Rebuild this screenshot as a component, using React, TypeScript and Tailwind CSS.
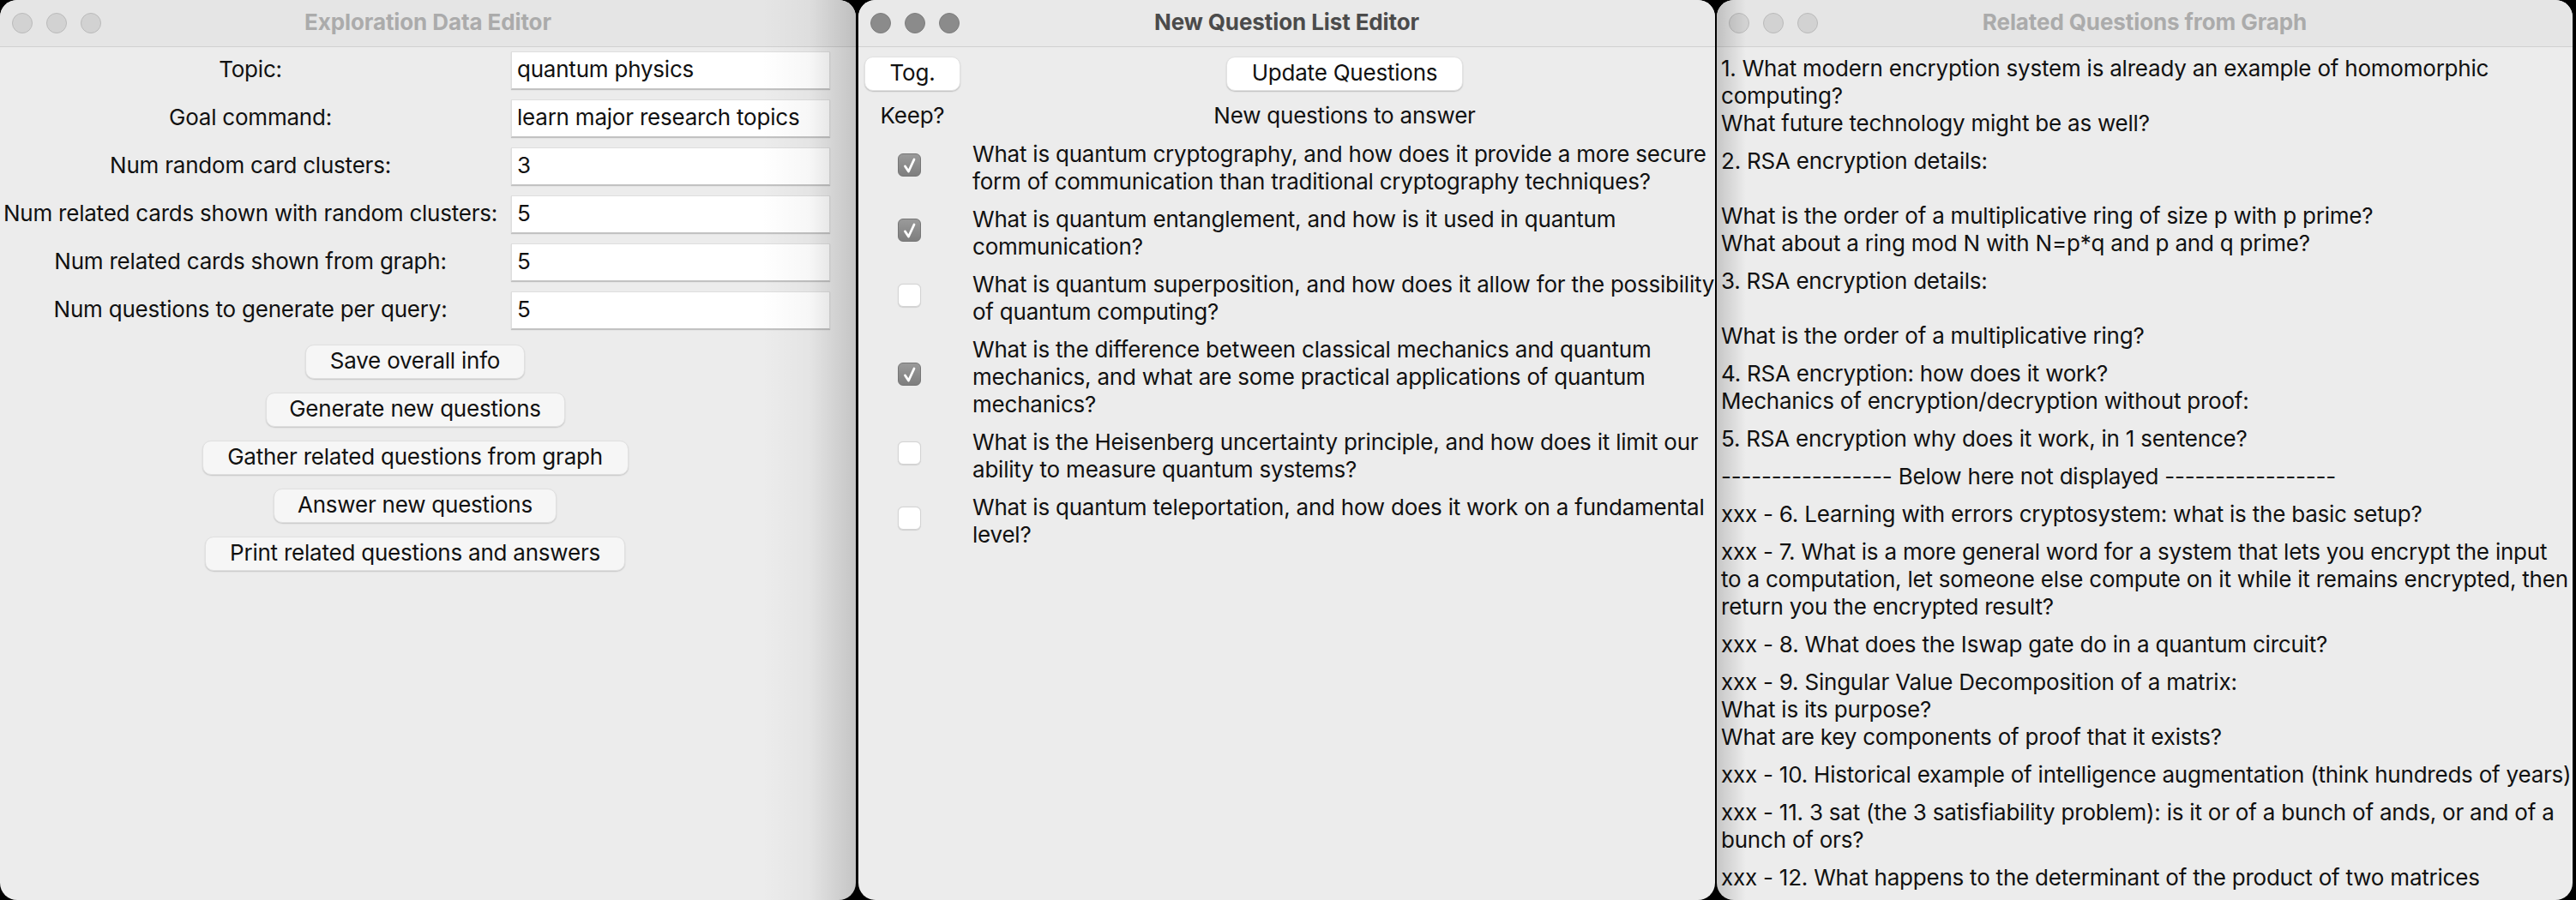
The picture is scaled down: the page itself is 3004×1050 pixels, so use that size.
import React from "react";

function Lights({ active }: { active: boolean }) {
  const c = active
    ? "w-[24px] h-[24px] rounded-full bg-[#8b8b8b] border border-[#7d7d7d]"
    : "w-[24px] h-[24px] rounded-full bg-[#d2d2d2] border border-[#bababa]";
  return (
    <div className="flex items-center gap-[16px] pl-[14px]">
      <div className={c} />
      <div className={c} />
      <div className={c} />
    </div>
  );
}

function TitleBar({ title, active }: { title: string; active: boolean }) {
  return (
    <div
      className={
        active
          ? "h-[55px] shrink-0 grid grid-cols-[1fr_auto_1fr] items-center bg-[#e9e9e9] border-b border-[#d0d0d0]"
          : "h-[55px] shrink-0 grid grid-cols-[1fr_auto_1fr] items-center bg-[#e5e5e5] border-b border-[#d0d0d0]"
      }
    >
      <Lights active={active} />
      <div
        className={
          active
            ? "text-[26px] font-bold tracking-[-0.1px] text-[#4b4b4b] leading-none pb-[2px]"
            : "text-[26px] font-bold tracking-[-0.1px] text-[#ababab] leading-none pb-[2px]"
        }
      >
        {title}
      </div>
      <div />
    </div>
  );
}

function Entry({ value }: { value: string }) {
  return (
    <div className="w-[372px] h-[44px] bg-white border border-[#dedede] border-b-[#c4c4c4] shadow-[0_1px_1px_rgba(0,0,0,0.18)] flex items-center pl-[6px] pb-[2px] text-[26px] leading-none">
      {value}
    </div>
  );
}

const rows: [string, string][] = [
  ["Topic:", "quantum physics"],
  ["Goal command:", "learn major research topics"],
  ["Num random card clusters:", "3"],
  ["Num related cards shown with random clusters:", "5"],
  ["Num related cards shown from graph:", "5"],
  ["Num questions to generate per query:", "5"],
];

const leftButtons: { label: string; w: string }[] = [
  { label: "Save overall info", w: "w-[256px]" },
  { label: "Generate new questions", w: "w-[349px]" },
  { label: "Gather related questions from graph", w: "w-[497px]" },
  { label: "Answer new questions", w: "w-[330px]" },
  { label: "Print related questions and answers", w: "w-[490px]" },
];

function LeftWindow() {
  return (
    <div className="relative w-[998px] h-[1050px] shrink-0 rounded-[20px] overflow-hidden bg-[#ececec] flex flex-col">
      <TitleBar title="Exploration Data Editor" active={false} />
      <div className="flex flex-col gap-[12px] pt-[5px]">
        {rows.map(([l, v]) => (
          <div key={l} className="flex items-center gap-[12px]">
            <div className="w-[584px] text-center text-[26px] leading-[32px] pb-[2px] whitespace-nowrap">{l}</div>
            <Entry value={v} />
          </div>
        ))}
      </div>
      <div className="w-[968px] flex flex-col items-center gap-[16px] pt-[18px]">
        {leftButtons.map((b) => (
          <div
            key={b.label}
            className={
              b.w +
              " h-[40px] rounded-[10px] bg-[#f6f6f6] border border-[#e0e0e0] shadow-[0_1px_1.5px_rgba(0,0,0,0.16)] flex items-center justify-center text-[26px] leading-none pb-[2px] whitespace-nowrap"
            }
          >
            {b.label}
          </div>
        ))}
      </div>
      <div className="pointer-events-none absolute top-0 right-0 h-full w-[110px] bg-linear-to-r from-transparent via-[rgba(0,0,0,0.03)] to-[rgba(0,0,0,0.17)]" />
    </div>
  );
}

function Check({ on }: { on: boolean }) {
  if (on) {
    return (
      <div className="w-[27px] h-[27px] rounded-[6px] bg-linear-to-b from-[#9a9a9a] to-[#7e7e7e] border border-[#767676] flex items-center justify-center">
        <svg width="18" height="20" viewBox="0 0 18 20">
          <path d="M3.5 11 L7.5 17 L14 3" fill="none" stroke="white" strokeWidth="2.8" strokeLinecap="round" strokeLinejoin="round" />
        </svg>
      </div>
    );
  }
  return <div className="w-[27px] h-[27px] rounded-[6px] bg-white border border-[#d4d4d4] shadow-[0_0.5px_1px_rgba(0,0,0,0.12)]" />;
}

const questions: { on: boolean; lines: string[] }[] = [
  {
    on: true,
    lines: [
      "What is quantum cryptography, and how does it provide a more secure",
      "form of communication than traditional cryptography techniques?",
    ],
  },
  { on: true, lines: ["What is quantum entanglement, and how is it used in quantum", "communication?"] },
  {
    on: false,
    lines: ["What is quantum superposition, and how does it allow for the possibility", "of quantum computing?"],
  },
  {
    on: true,
    lines: [
      "What is the difference between classical mechanics and quantum",
      "mechanics, and what are some practical applications of quantum",
      "mechanics?",
    ],
  },
  {
    on: false,
    lines: ["What is the Heisenberg uncertainty principle, and how does it limit our", "ability to measure quantum systems?"],
  },
  { on: false, lines: ["What is quantum teleportation, and how does it work on a fundamental", "level?"] },
];

function MiddleWindow() {
  return (
    <div className="relative w-[999px] h-[1050px] shrink-0 rounded-[20px] overflow-hidden bg-[#ececec] flex flex-col">
      <TitleBar title="New Question List Editor" active={true} />
      <div className="grid grid-cols-[126px_868px] gap-x-[7px] pt-[11px] text-[26px] leading-[32px]">
        <div className="h-[40px] flex items-center justify-center">
          <div className="w-[112px] h-[40px] rounded-[10px] bg-white border border-[#e2e2e2] shadow-[0_1px_1.5px_rgba(0,0,0,0.2)] flex items-center justify-center leading-none pb-[2px]">
            Tog.
          </div>
        </div>
        <div className="h-[40px] flex items-center justify-center">
          <div className="w-[276px] h-[40px] rounded-[10px] bg-white border border-[#e2e2e2] shadow-[0_1px_1.5px_rgba(0,0,0,0.2)] flex items-center justify-center leading-none pb-[2px]">
            Update Questions
          </div>
        </div>
        <div className="mt-[13px] text-center">Keep?</div>
        <div className="mt-[13px] text-center">New questions to answer</div>
        {questions.map((q, i) => (
          <React.Fragment key={i}>
            <div className={(i === 0 ? "mt-[13px]" : "mt-[12px]") + " flex items-center justify-center pr-[7px]"}>
              <div className="mb-[7px]">
                <Check on={q.on} />
              </div>
            </div>
            <div className={(i === 0 ? "mt-[13px]" : "mt-[12px]") + " whitespace-nowrap"}>
              {q.lines.map((l, j) => (
                <div key={j}>{l}</div>
              ))}
            </div>
          </React.Fragment>
        ))}
      </div>
    </div>
  );
}

const related: string[][] = [
  [
    "1. What modern encryption system is already an example of homomorphic",
    "computing?",
    "What future technology might be as well?",
  ],
  [
    "2. RSA encryption details:",
    "",
    "What is the order of a multiplicative ring of size p with p prime?",
    "What about a ring mod N with N=p*q and p and q prime?",
  ],
  ["3. RSA encryption details:", "", "What is the order of a multiplicative ring?"],
  ["4. RSA encryption: how does it work?", "Mechanics of encryption/decryption without proof:"],
  ["5. RSA encryption why does it work, in 1 sentence?"],
  ["----------------- Below here not displayed -----------------"],
  ["xxx - 6. Learning with errors cryptosystem: what is the basic setup?"],
  [
    "xxx - 7. What is a more general word for a system that lets you encrypt the input",
    "to a computation, let someone else compute on it while it remains encrypted, then",
    "return you the encrypted result?",
  ],
  ["xxx - 8. What does the Iswap gate do in a quantum circuit?"],
  ["xxx - 9. Singular Value Decomposition of a matrix:", "What is its purpose?", "What are key components of proof that it exists?"],
  ["xxx - 10. Historical example of intelligence augmentation (think hundreds of years)"],
  ["xxx - 11. 3 sat (the 3 satisfiability problem): is it or of a bunch of ands, or and of a", "bunch of ors?"],
  ["xxx - 12. What happens to the determinant of the product of two matrices"],
];

function RightWindow() {
  return (
    <div className="relative w-[998px] h-[1050px] shrink-0 rounded-[20px] overflow-hidden bg-[#ececec] flex flex-col">
      <TitleBar title="Related Questions from Graph" active={false} />
      <div className="flex flex-col gap-[12px] pt-[9px] pl-[5px] text-[26px] leading-[32px] whitespace-nowrap">
        {related.map((item, i) => (
          <div key={i}>
            {item.map((l, j) => (
              <div key={j} className="h-[32px]">
                {l}
              </div>
            ))}
          </div>
        ))}
      </div>
      <div className="pointer-events-none absolute top-0 left-0 h-full w-[34px] bg-linear-to-r from-[rgba(0,0,0,0.16)] to-transparent" />
    </div>
  );
}

export default function App() {
  return (
    <div className="w-[3004px] h-[1050px] bg-black flex overflow-hidden text-[#111] tracking-[-0.22px] font-['Inter','Liberation_Sans',sans-serif]">
      <LeftWindow />
      <div className="w-[3px] shrink-0" />
      <MiddleWindow />
      <div className="w-[2px] shrink-0" />
      <RightWindow />
    </div>
  );
}
